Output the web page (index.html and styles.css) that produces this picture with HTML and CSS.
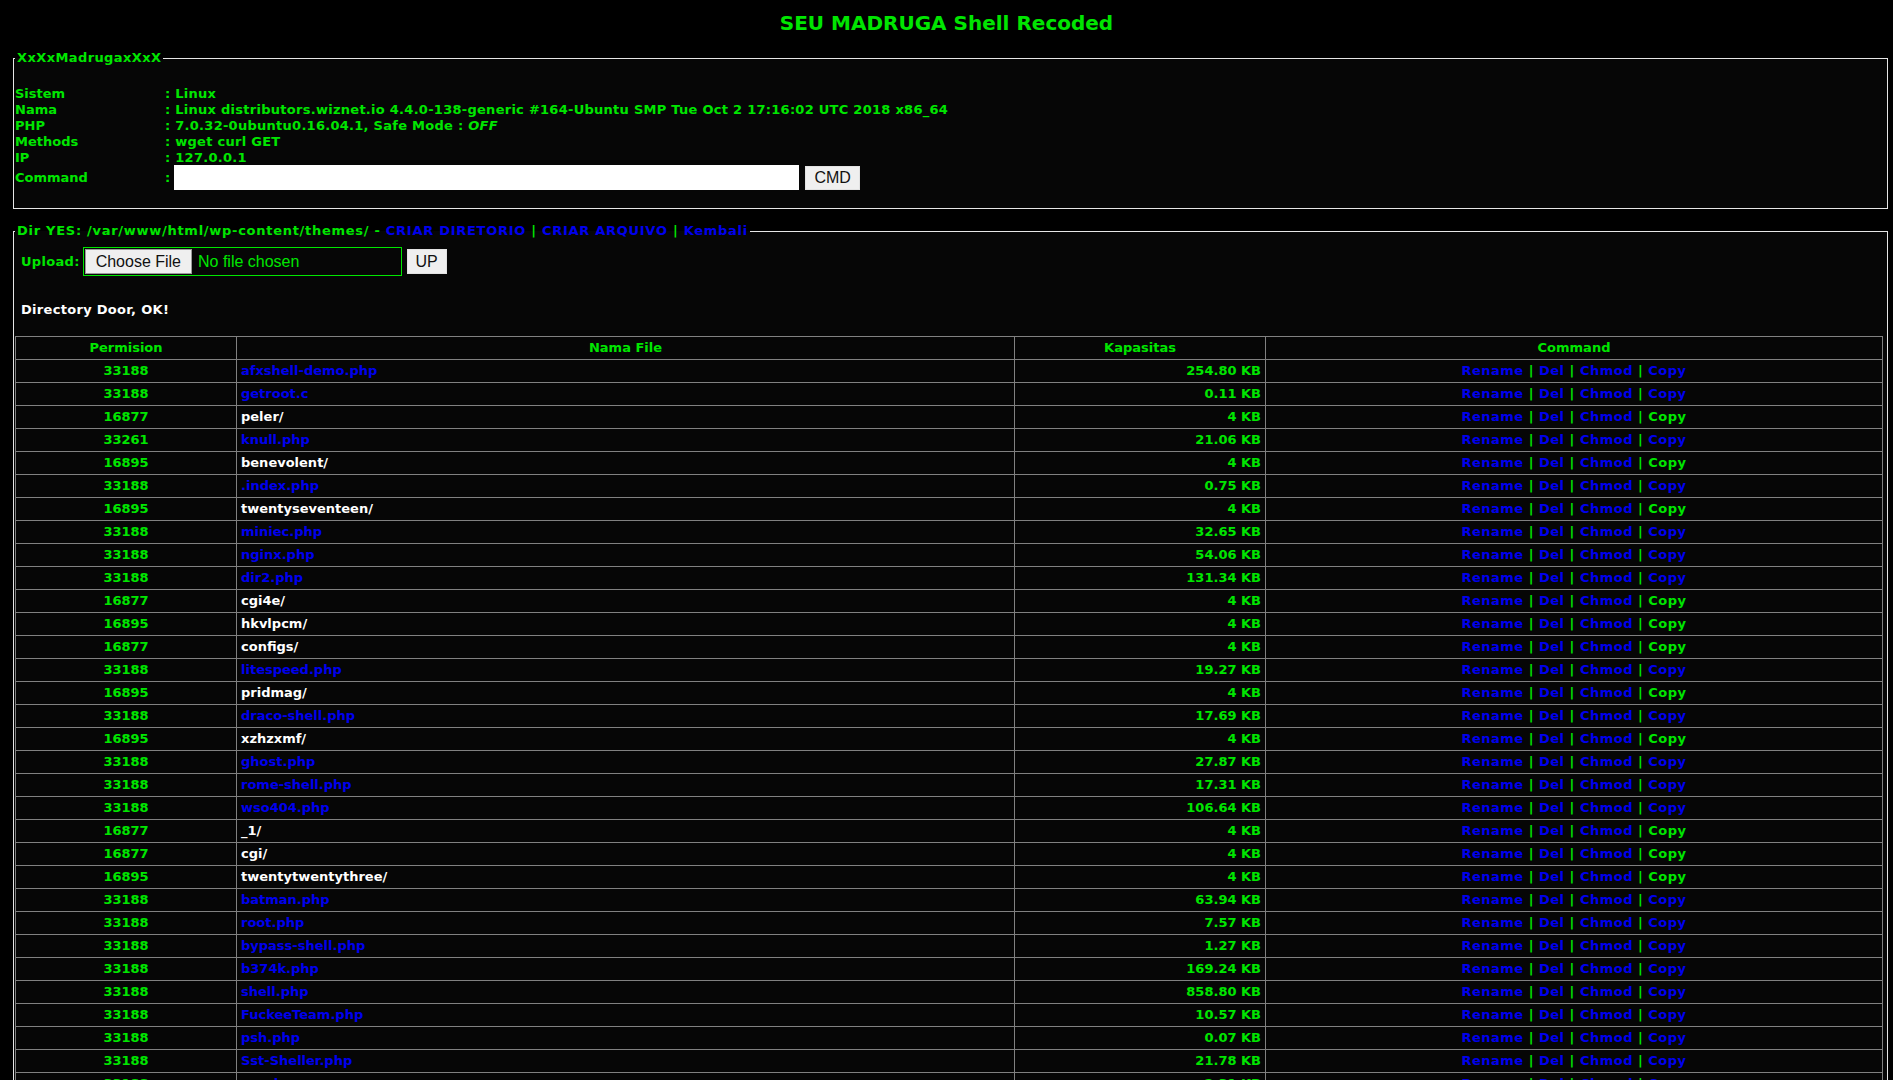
FILE: index.html
```html
<!DOCTYPE html>
<html lang="en">

<head>
    <meta charset="UTF-8">
    <meta name="viewport" content="width=device-width, initial-scale=1.0">
    <title>SEU MADRUGA Shell Recoded</title>
    <link rel="stylesheet" href="styles.css">
</head>

<body>
    <h1 class="title">SEU MADRUGA Shell Recoded</h1>

    <!-- server info -->
    <fieldset class="panel info_panel">
        <legend>XxXxMadrugaxXxX</legend>
        <div class="info_row"><span class="info_label">Sistem</span><span class="info_value">: Linux</span></div>
        <div class="info_row"><span class="info_label">Nama</span><span class="info_value">: Linux distributors.wiznet.io 4.4.0-138-generic #164-Ubuntu SMP Tue Oct 2 17:16:02 UTC 2018 x86_64</span></div>
        <div class="info_row"><span class="info_label">PHP</span><span class="info_value">: 7.0.32-0ubuntu0.16.04.1, Safe Mode : <i>OFF</i></span></div>
        <div class="info_row"><span class="info_label">Methods</span><span class="info_value">: wget curl GET</span></div>
        <div class="info_row"><span class="info_label">IP</span><span class="info_value">: 127.0.0.1</span></div>
        <form class="info_row cmd_row" action="">
            <span class="info_label">Command</span>
            <span class="colon">:</span>
            <input type="text" name="cmd" class="cmd_input">
            <input type="submit" value="CMD" class="btn btn_cmd">
        </form>
    </fieldset>

    <!-- file manager -->
    <fieldset class="panel dir_panel">
        <legend>Dir YES: /var/www/html/wp-content/themes/ - <a href="#">CRIAR DIRETORIO</a> | <a href="#">CRIAR ARQUIVO</a> | <a href="#">Kembali</a></legend>
        <form class="upload_form" action="">
            <label for="upload_file">Upload:</label>
            <input type="file" name="upload_file" id="upload_file" class="file_input">
            <input type="submit" value="UP" class="btn btn_up">
        </form>
        <p class="status">Directory Door, OK!</p>

        <table class="file_table">
            <colgroup>
                <col class="col_perm">
                <col class="col_name">
                <col class="col_size">
                <col>
            </colgroup>
            <thead>
                <tr>
                    <th>Permision</th>
                    <th>Nama File</th>
                    <th>Kapasitas</th>
                    <th>Command</th>
                </tr>
            </thead>
            <tbody id="file_rows"></tbody>
        </table>
    </fieldset>

    <script>
        // [permission, name, size, is directory]
        const files = [
            ["33188", "afxshell-demo.php", "254.80 KB", false],
            ["33188", "getroot.c", "0.11 KB", false],
            ["16877", "peler/", "4 KB", true],
            ["33261", "knull.php", "21.06 KB", false],
            ["16895", "benevolent/", "4 KB", true],
            ["33188", ".index.php", "0.75 KB", false],
            ["16895", "twentyseventeen/", "4 KB", true],
            ["33188", "miniec.php", "32.65 KB", false],
            ["33188", "nginx.php", "54.06 KB", false],
            ["33188", "dir2.php", "131.34 KB", false],
            ["16877", "cgi4e/", "4 KB", true],
            ["16895", "hkvlpcm/", "4 KB", true],
            ["16877", "configs/", "4 KB", true],
            ["33188", "litespeed.php", "19.27 KB", false],
            ["16895", "pridmag/", "4 KB", true],
            ["33188", "draco-shell.php", "17.69 KB", false],
            ["16895", "xzhzxmf/", "4 KB", true],
            ["33188", "ghost.php", "27.87 KB", false],
            ["33188", "rome-shell.php", "17.31 KB", false],
            ["33188", "wso404.php", "106.64 KB", false],
            ["16877", "_1/", "4 KB", true],
            ["16877", "cgi/", "4 KB", true],
            ["16895", "twentytwentythree/", "4 KB", true],
            ["33188", "batman.php", "63.94 KB", false],
            ["33188", "root.php", "7.57 KB", false],
            ["33188", "bypass-shell.php", "1.27 KB", false],
            ["33188", "b374k.php", "169.24 KB", false],
            ["33188", "shell.php", "858.80 KB", false],
            ["33188", "FuckeeTeam.php", "10.57 KB", false],
            ["33188", "psh.php", "0.07 KB", false],
            ["33188", "Sst-Sheller.php", "21.78 KB", false],
            ["33188", "up.php", "2.31 KB", false]
        ];

        const file_rows = document.getElementById("file_rows");

        for (const [perm, name, size, is_dir] of files) {
            const name_cell = is_dir
                ? `<a href="#" class="dir_link">${name}</a>`
                : `<a href="#">${name}</a>`;

            // directories can't be copied, so Copy is plain text for them
            const copy = is_dir ? "Copy" : `<a href="#">Copy</a>`;

            const row = document.createElement("tr");
            row.innerHTML = `
                <td class="perm">${perm}</td>
                <td class="name">${name_cell}</td>
                <td class="size">${size}</td>
                <td class="cmd"><a href="#">Rename</a> | <a href="#">Del</a> | <a href="#">Chmod</a> | ${copy}</td>`;
            file_rows.appendChild(row);
        }
    </script>
</body>

</html>
```

FILE: styles.css
```css
* {
    box-sizing: border-box;
}

body {
    margin: 0;
    background-color: #000;
    color: #00e600;
    font-family: "DejaVu Sans", Verdana, sans-serif;
    font-size: 13px;
    font-weight: bold;
    line-height: 16px;
}

a {
    color: #0000ee;
    text-decoration: none;
}

.title {
    margin: 0;
    padding-top: 11px;
    text-align: center;
    font-size: 20px;
    line-height: 24px;
}

.panel {
    margin: 0 5px 0 13px;
    padding: 0 4px 0 1px;
    border: 1px solid #e6e6e6;
    background-color: #060606;
}

.panel legend {
    padding: 0 2px;
}

.info_panel {
    margin-top: 15px;
    padding-top: 20px;
    padding-bottom: 18px;
}

.info_panel legend {
    letter-spacing: 0.4px;
}

.info_row {
    display: flex;
    align-items: center;
}

.info_label {
    width: 150px;
    flex-shrink: 0;
}

.info_value {
    letter-spacing: 0.27px;
}

.cmd_row {
    margin: -1px 0 0;
}

.colon {
    margin-right: 4px;
}

.cmd_input {
    width: 625px;
    height: 25px;
    border: none;
    outline: none;
    background-color: #fff;
    font-size: 14px;
}

.btn {
    background-color: #efefef;
    border: 1px solid #e2e2e2;
    border-radius: 0;
    color: #111;
    font-family: "Liberation Sans", Arial, sans-serif;
    font-size: 16px;
    font-weight: normal;
    cursor: pointer;
}

.btn_cmd {
    width: 55px;
    height: 24px;
    margin-left: 6px;
    padding: 0;
}

.dir_panel {
    margin-top: 14px;
    padding-top: 8px;
}

.dir_panel legend {
    letter-spacing: 0.72px;
}

.upload_form {
    display: flex;
    align-items: center;
    margin-left: 6px;
}

.upload_form label {
    margin-right: 3px;
    letter-spacing: 0.3px;
}

.file_input {
    width: 319px;
    height: 29px;
    padding: 1px;
    border: 1px solid #00e600;
    color: #00e600;
    font-family: "Liberation Sans", Arial, sans-serif;
    font-size: 16px;
    font-weight: normal;
}

.file_input::file-selector-button {
    height: 25px;
    margin-right: 6px;
    padding: 0 10px;
    background-color: #efefef;
    border: 1px solid #9a9a9a;
    border-radius: 0;
    font: inherit;
    color: #111;
}

.btn_up {
    width: 40px;
    height: 25px;
    margin-left: 5px;
    padding: 0;
}

.status {
    margin: 26px 0 18px 6px;
    color: #fff;
    letter-spacing: 0.3px;
}

.file_table {
    width: 100%;
    border-collapse: collapse;
    table-layout: fixed;
    border: 1px solid #808080;
}

.col_perm {
    width: 221px;
}

.col_name {
    width: 778px;
}

.col_size {
    width: 251px;
}

.file_table th,
.file_table td {
    border: 1px solid #808080;
    padding: 3px 4px;
    height: 23px;
    white-space: nowrap;
}

.file_table th,
.perm,
.cmd {
    text-align: center;
}

.cmd {
    letter-spacing: 0.5px;
}

.size {
    text-align: right;
}

.dir_link {
    color: #fff;
}
```
